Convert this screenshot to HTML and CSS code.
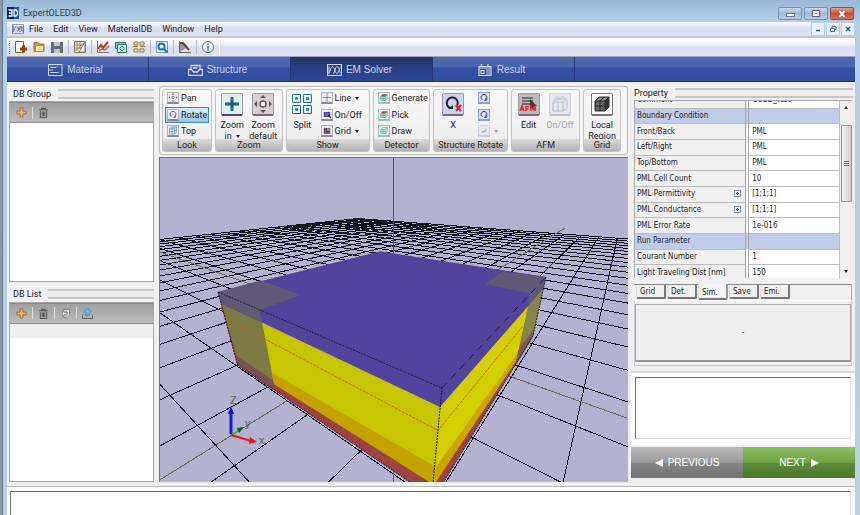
FILE: index.html
```html
<!DOCTYPE html>
<html lang="en">
<head>
<meta charset="utf-8">
<title>ExpertOLED3D</title>
<link rel="stylesheet" href="styles.css">
</head>
<body>
<svg class="defs" aria-hidden="true">
  <defs>
    <symbol id="plus" viewBox="0 0 12 12"><path d="M4.500 1h3v3.500H11v3H7.500V11h-3V7.500H1v-3h3.500z" fill="#f2b46c" stroke="#9a6a38"/></symbol>
    <symbol id="trash" viewBox="0 0 12 12"><path d="M1 3h10M4 3V1.500h4V3M2.500 4v7.500h7V4M4.500 5v5M6 5v5M7.500 5v5" fill="none" stroke="#555" stroke-width="1.100"/></symbol>
    <symbol id="wave" viewBox="0 0 15 12"><rect x=".5" y=".5" width="14" height="11" fill="none" stroke="currentColor"/><path d="M1 9.500C3 9.500 3.500 2.500 5.500 2.500S8 9.500 10 9.500s2-5 4-7M2 2.500v7M6 9.500C8 9.500 8 2.500 10 2.500s2 5 4 7" fill="none" stroke="currentColor"/></symbol>
    <symbol id="cube" viewBox="0 0 14 14"><path d="M1.500 4.500h8v8h-8zM1.500 4.500l3-3h8l-3 3M12.500 1.500v8l-3 3M5.500 4.500v8M1.500 8.500h8l3-3M5.500 4.500l3-3" fill="none" stroke="currentColor"/></symbol>
    <symbol id="rot" viewBox="0 0 14 14"><path d="M4.500 10.500a4.500 4.500 0 1 1 5 0M10.500 8v3.500H7.500" fill="none" stroke="currentColor" stroke-width="1.500"/></symbol>
    <symbol id="cross4" viewBox="0 0 14 14"><circle cx="7" cy="7" r="2" fill="none" stroke="currentColor"/><path d="M7 0l2 2.500H5zM7 14l2-2.500H5zM0 7l2.500-2v4zM14 7l-2.500-2v4z" fill="currentColor"/></symbol>
    <symbol id="det" viewBox="0 0 14 14"><path d="M2 5l3-3h7l-3 3z" fill="#c33"/><path d="M2 5.500h7v6H2zM9 5.500l3-3v6l-3 3M5.500 5.500v6M2 8.500h7" fill="none" stroke="#2b8f80"/></symbol>
    <symbol id="dets" viewBox="0 0 14 14"><path d="M2 5.500h7v6H2zM9 5.500l3-3v6l-3 3M2 5.500l3-3h7M5.500 5.500v6M2 8.500h7" fill="none" stroke="#3aa79c"/></symbol>
  </defs>
</svg>

<div class="window">
  <header class="titlebar">
    <svg class="logo" viewBox="0 0 12 12"><rect width="12" height="12" fill="#0c2560"/><rect x="7" width="5" height="12" fill="#1f56b5"/><path d="M1.500 3h3.500v6H1.500M2 6h3M7 3h2l1.500 1.500v3L9 9H7z" fill="none" stroke="#fff" stroke-width="1.300"/></svg>
    <h1>ExpertOLED3D</h1>
    <div class="winbtns">
      <button type="button" aria-label="Minimize"><svg viewBox="0 0 22 12"><rect x="7.500" y="5.500" width="8" height="3" fill="#fff" stroke="#778"/></svg></button>
      <button type="button" aria-label="Maximize"><svg viewBox="0 0 22 12"><rect x="7.500" y="2.500" width="7" height="6" fill="#fff" stroke="#667"/><rect x="10" y="5" width="2" height="1" fill="#556"/></svg></button>
      <button type="button" class="close" aria-label="Close"><svg viewBox="0 0 22 12"><path d="M8.500 3l5 6M13.500 3l-5 6" stroke="#644" stroke-width="3"/><path d="M8.500 3l5 6M13.500 3l-5 6" stroke="#fff" stroke-width="2"/></svg></button>
    </div>
  </header>

  <nav class="menubar">
    <svg class="menuicon" viewBox="0 0 15 12"><use href="#wave"/><path d="M8 7l4-4" stroke="#c43" stroke-width="1.500"/></svg>
    <button type="button">File</button><button type="button">Edit</button><button type="button">View</button><button type="button">MaterialDB</button><button type="button">Window</button><button type="button">Help</button>
    <div class="mdi">
      <button type="button" aria-label="Minimize view"><svg viewBox="0 0 12 12"><path d="M4 7.500h4" stroke="#457" stroke-width="1.500"/></svg></button>
      <button type="button" aria-label="Restore view"><svg viewBox="0 0 12 12"><path d="M3.500 5.500h4v3h-4zM5 5V3.500h4v3H8" fill="none" stroke="#568"/></svg></button>
      <button type="button" aria-label="Close view"><svg viewBox="0 0 12 12"><path d="M4 4l4 4M8 4L4 8" stroke="#457" stroke-width="1.500"/></svg></button>
    </div>
  </nav>

  <div class="toolbar">
    <span class="grip"></span>
    <button type="button" aria-label="New"><svg viewBox="0 0 14 14"><path d="M1.500 1.500h8v11h-8z" fill="#fff" stroke="#8a5a2a"/><path d="M6 9h7M9.500 5.500v7" stroke="#8a4a10" stroke-width="3"/></svg></button>
    <button type="button" aria-label="Open"><svg viewBox="0 0 14 14"><path d="M2 11.500v-9h4l1 1.500h5v7.500z" fill="#d59a3a" stroke="#a8731c"/><path d="M3.500 5.500h8v6h-8z" fill="#fbe5ae" stroke="#c08c35"/></svg></button>
    <button type="button" aria-label="Save"><svg viewBox="0 0 14 14"><path d="M1 2h12v11H1z" fill="#666b70"/><path d="M4 2h6v4H4zM4 9h6v4H4z" fill="#c4c7ca"/></svg></button>
    <span class="sep"></span>
    <button type="button" aria-label="Mesh"><svg viewBox="0 0 14 14"><path d="M1.500 1.500h11v11h-11z" fill="#ece5d8" stroke="#8b7d66"/><path d="M1 12L12 2M4 2v9M7 2v7M2 5h9M2 8h6" stroke="#a28c6b"/><path d="M12 2v10H6z" fill="#fff" stroke="#777"/></svg></button>
    <span class="sep"></span>
    <button type="button" aria-label="Chart"><svg viewBox="0 0 14 14"><path d="M1.500 1v11.500H13" fill="none" stroke="#777"/><path d="M2 9l3-4 2 3 5-6" fill="none" stroke="#b43c2d" stroke-width="2"/><path d="M3 11l3-2 3 1 4-4" fill="none" stroke="#a56a52" stroke-width="1.500"/></svg></button>
    <button type="button" aria-label="Batch"><svg viewBox="0 0 14 14"><path d="M1.500 2.500h10v6h-10z" fill="#8fd0bb" stroke="#28735e"/><path d="M3.500 4.500h9v8h-9z" fill="#d6efe6" stroke="#28735e"/><circle cx="8" cy="8.500" r="2" fill="none" stroke="#28735e"/></svg></button>
    <button type="button" aria-label="Array"><svg viewBox="0 0 14 14"><path d="M2 2h4v3H2zM8 2h4v3H8zM2 9h4v3H2zM8 9h4v3H8z" fill="#f6e2b4" stroke="#98733a"/><path d="M1 6.500h5M8 6.500h5" stroke="#98733a"/></svg></button>
    <span class="sep"></span>
    <button type="button" aria-label="Inspect"><svg viewBox="0 0 14 14"><path d="M1.500 1.500h11v11h-11z" fill="#e8f1f7" stroke="#7b98ad"/><circle cx="6.500" cy="6.500" r="3" fill="#fff" stroke="#1678b0" stroke-width="2"/><path d="M9 9l3.500 3.500" stroke="#1678b0" stroke-width="2"/></svg></button>
    <span class="sep"></span>
    <button type="button" aria-label="Profile"><svg viewBox="0 0 14 14"><path d="M1.500 1v11.500H13" fill="none" stroke="#666"/><path d="M2 3c3 0 5 3 6 5l-6 4z" fill="#999"/><path d="M2 3h3l6 7" fill="none" stroke="#6b3c38" stroke-width="2"/></svg></button>
    <span class="sep"></span>
    <button type="button" aria-label="About"><svg viewBox="0 0 14 14"><circle cx="7" cy="7" r="5.500" fill="#fff" stroke="#5a6472"/><path d="M7 6v4.500M7 3.500V5" stroke="#2674b8" stroke-width="1.500"/></svg></button>
    <span class="sep light"></span>
  </div>

  <nav class="modes">
    <button type="button"><svg viewBox="0 0 15 12"><path d="M14 .5H.5v11H14zM2.500 3.500h6M1 6h4M2.500 8.500h8" fill="none" stroke="currentColor"/></svg>Material</button>
    <button type="button"><svg viewBox="0 0 15 12"><path d="M.5 5.500h3l2 2.500h4l2-2.500h3v6H.5zM3 5V1.500h9V5M5.500 5v-1h4" fill="none" stroke="currentColor" stroke-width="1.300"/></svg>Structure</button>
    <button type="button" class="on" aria-current="page"><svg viewBox="0 0 15 12"><use href="#wave"/></svg>EM Solver</button>
    <button type="button"><svg viewBox="0 0 15 12"><path d="M1 2.500h12v9H1zM1 4h12M3.500 0v3M10 0v3M3 6.500h3v3H3zM8 6h4M8 8h4M8 10h4" fill="none" stroke="currentColor" stroke-width="1.200"/></svg>Result</button>
  </nav>

  <main class="work">
    <aside class="side">
      <section class="dock">
        <h2>DB Group</h2>
        <div class="list">
          <div class="listbar">
            <button type="button" aria-label="Add group"><svg viewBox="0 0 12 12"><use href="#plus"/></svg></button>
            <button type="button" aria-label="Delete group"><svg viewBox="0 0 12 12"><use href="#trash"/></svg></button>
          </div>
        </div>
      </section>
      <section class="dock">
        <h2>DB List</h2>
        <div class="list">
          <div class="listbar">
            <button type="button" aria-label="Add item"><svg viewBox="0 0 12 12"><use href="#plus"/></svg></button>
            <button type="button" aria-label="Delete item"><svg viewBox="0 0 12 12"><use href="#trash"/></svg></button>
            <button type="button" aria-label="Copy item"><svg viewBox="0 0 12 12"><path d="M3.500 1.500h7v6l-3 3h-4z" fill="#eee" stroke="#777"/><path d="M2.500 3.500h5v5h-5zM4 5h3M4 7h3" fill="#fff" stroke="#777"/></svg></button>
            <button type="button" aria-label="Export item"><svg viewBox="0 0 12 12"><path d="M6 0l4 4-2 2v2H4V6L2 4z" fill="#6fb6e4" stroke="#3f7fae"/><path d="M.5 8v3.500h11V8" fill="none" stroke="#555"/></svg></button>
          </div>
          <div class="listhead"></div>
        </div>
      </section>
    </aside>

    <section class="center">
      <div class="ribbon">
        <div class="group look">
          <div class="items col">
            <button type="button" class="sm"><svg class="ic gray" viewBox="0 0 14 14"><use href="#cross4"/></svg>Pan</button>
            <button type="button" class="sm on"><svg class="ic violet" viewBox="0 0 14 14"><use href="#rot"/></svg>Rotate</button>
            <button type="button" class="sm"><svg class="ic sky" viewBox="0 0 14 14"><use href="#cube"/></svg>Top</button>
          </div>
          <h3>Look</h3>
        </div>
        <div class="group">
          <div class="items">
            <button type="button" class="lg"><svg class="big teal" viewBox="0 0 20 20"><path d="M10 3v14M3 10h14" stroke="#176a82" stroke-width="3"/></svg><span>Zoom<br>in <i class="arr"></i></span></button>
            <button type="button" class="lg"><svg class="big warm" viewBox="0 0 20 20"><circle cx="10" cy="10" r="3" fill="#f4eeee" stroke="#5c5254" stroke-width="1.500"/><path d="M10 1l3 3H7zM10 19l3-3H7zM1 10l3-3v6zM19 10l-3-3v6z" fill="#5c5254"/></svg><span>Zoom<br>default</span></button>
          </div>
          <h3>Zoom</h3>
        </div>
        <div class="group">
          <div class="items">
            <button type="button" class="lg"><svg class="big split" viewBox="0 0 20 20"><path d="M.5.5h8v8h-8zM11.500.5h8v8h-8zM.5 11.500h8v8h-8zM11.500 11.500h8v8h-8z" fill="#eaf7fa" stroke="#1c7a92"/><path d="M3 3h3v3H3zM14 3h3v3h-3zM3 14h3v3H3zM14 14h3v3h-3z" fill="#3791ac"/></svg><span>Split</span></button>
            <div class="stack">
              <button type="button" class="sm"><svg class="ic gray" viewBox="0 0 14 14"><path d="M0 7h14M7 0v14" stroke="#446088"/></svg>Line <i class="arr"></i></button>
              <button type="button" class="sm"><svg class="ic gray" viewBox="0 0 14 14"><path d="M2 3h10v8H2z" fill="#3a49c0"/><path d="M4 5h5v4H4z" fill="#d34860"/><path d="M9 8l4 4" stroke="#223" stroke-width="2"/></svg>On/Off</button>
              <button type="button" class="sm"><svg class="ic gray" viewBox="0 0 14 14"><path d="M2 3h10v9H2z" fill="#403a6a"/><path d="M3 4h3v3H3z" fill="#d24343"/><path d="M7 4h4v3H7z" fill="#e0b13b"/><path d="M3 8h3v3H3z" fill="#c9484a"/><path d="M7 8h4v3H7z" fill="#4c56c4"/></svg>Grid <i class="arr"></i></button>
            </div>
          </div>
          <h3>Show</h3>
        </div>
        <div class="group">
          <div class="items col">
            <button type="button" class="sm"><svg class="ic mint" viewBox="0 0 14 14"><use href="#det"/></svg>Generate</button>
            <button type="button" class="sm"><svg class="ic mint" viewBox="0 0 14 14"><use href="#det"/></svg>Pick</button>
            <button type="button" class="sm"><svg class="ic mint" viewBox="0 0 14 14"><use href="#dets"/></svg>Draw</button>
          </div>
          <h3>Detector</h3>
        </div>
        <div class="group">
          <div class="items">
            <button type="button" class="lg"><svg class="big blue" viewBox="0 0 20 20"><path d="M7 14a5.500 5.500 0 1 1 6-1" fill="none" stroke="#223" stroke-width="2"/><path d="M5 15h5v-4z" fill="#223"/><path d="M13 11l5 6M18 11l-5 6" stroke="#e22" stroke-width="2"/></svg><span>X</span></button>
            <div class="stack">
              <button type="button" class="sm" aria-label="Rotate Y"><svg class="ic blue" viewBox="0 0 14 14"><use href="#rot"/><path d="M9 8l3 3" stroke="#3a9c3a" stroke-width="2"/></svg></button>
              <button type="button" class="sm" aria-label="Rotate Z"><svg class="ic blue" viewBox="0 0 14 14"><use href="#rot"/><path d="M9 8l3 3" stroke="#3a6fd0" stroke-width="2"/></svg></button>
              <button type="button" class="sm off" aria-label="Undo rotation" disabled><svg class="ic blue" viewBox="0 0 14 14"><path d="M3 9h4l4-3" fill="none" stroke="#446" stroke-width="2"/></svg> <i class="arr"></i></button>
            </div>
          </div>
          <h3>Structure Rotate</h3>
        </div>
        <div class="group">
          <div class="items">
            <button type="button" class="lg"><svg class="big dark" viewBox="0 0 20 20"><path d="M3 4h11M3 7h11M3 10h11" stroke="#555" stroke-width="1.500"/><path d="M11 5l7 7-3 0 2 4-2 1-2-4-2 2z" fill="#4a3434"/><path d="M1 17l2-5 2 5M2 15.500h2.500M7 17v-4.500h3M7 15h2.500M12 17v-4.500l2 2.500 2-2.500V17" fill="none" stroke="#e8262a" stroke-width="1.500"/></svg><span>Edit</span></button>
            <button type="button" class="lg off" disabled><svg class="big blue" viewBox="0 0 20 20"><path d="M3 8h10v9H3zM3 8l3-3h11l-4 3M17 5v9l-4 3M8 8v9M5 5c0-4 4-2 5 0 1-3 5-3 5 0" fill="none" stroke="#668"/></svg><span>On/Off</span></button>
          </div>
          <h3>AFM</h3>
        </div>
        <div class="group local">
          <div class="items">
            <button type="button" class="lg"><svg class="big cubebox" viewBox="0 0 20 20"><path d="M3 7h10v10H3z" fill="#666"/><path d="M3 7l4-4h10l-4 4z" fill="#8a8a8a"/><path d="M17 3v10l-4 4V7z" fill="#3c3c3c"/><path d="M3 7h10v10H3zM3 7l4-4h10l-4 4M17 3v10l-4 4M8 7v10M3 12h10l4-4M8 7l4-4M15 5v10" fill="none" stroke="#262626"/></svg><span>Local<br>Region</span></button>
          </div>
          <h3>Grid</h3>
        </div>
      </div>

      <svg class="view" viewBox="160 157 468 324" preserveAspectRatio="xMidYMid slice" role="img" aria-label="3D structure view">
        <g id="floor" fill="none" stroke="#15151f" stroke-width="1" shape-rendering="crispEdges"></g>
        <g stroke="#6b6a52" stroke-width="1" shape-rendering="crispEdges">
          <path d="M150 247.500L627 417M150 485L565 227"/>
          <path d="M393.500 400V482"/>
        </g>
        <path d="M218 291L380 250.500 546 276 542.500 288 533 335 443 482H411L237.500 364z" fill="#9c4444"/>
        <path d="M221.500 302L262.500 321 274 383 237 357z" fill="#7b7a42"/>
        <path d="M236 354L274 380V389L238 364z" fill="#7a5052"/>
        <path d="M262 321L440 405 434 483 274 383z" fill="#c7c400"/>
        <path d="M272.500 372L436 466 434 484 274 382.500z" fill="#c4a200"/>
        <path d="M440 405L529 304 516 360 434 483z" fill="#d4d000"/>
        <path d="M436 466L517 353 516 360 434 484z" fill="#caa400"/>
        <path d="M528 305L542.500 287 533 334 516.500 361z" fill="#86844a"/>
        <path d="M518 350L534 328 533 336 516 364z" fill="#805458"/>
        <path d="M218 291L380 250.500 546 276 542.500 288 528 305 440 406 262 321.500 221.500 303z" fill="#52449c"/>
        <path d="M218 291L261 279.500 301 294 259.500 309 262.500 321.500 221.500 303z" fill="#5f5975"/>
        <path d="M502 271L546 276 542.500 288 528 305 530 292.500 485 283z" fill="#5f5975"/>
        <path d="M225 317L438 429.500 523 325" fill="none" stroke="#c8641c" stroke-dasharray="3 1"/>
        <g fill="none" stroke="#1b1836" stroke-dasharray="2 1">
          <path d="M218 291L442 387 433 482M218 291L237.500 364 411 482M546 276L533 335 443 482"/>
          <path d="M442 387L546 276" stroke-dasharray="7 6"/>
        </g>
        <path d="M393.500 157V283" stroke="#55544e"/>
        <path d="M231 433V412" stroke="#1616e0" stroke-width="3"/><path d="M228 413l3-8 3 8z" fill="#1616e0"/>
        <path d="M231 434l9-5" stroke="#18c018" stroke-width="2"/><path d="M237 427l7-1-5 6z" fill="#0c5c1c"/>
        <path d="M231 434l20 6" stroke="#f01414" stroke-width="2"/><path d="M250 436l7 5-8 2z" fill="#f01414"/>
        <g class="axis"><text x="230" y="403">Z</text><text x="245" y="426">y</text><text x="259" y="443">x</text></g>
      </svg>
    </section>

    <aside class="props">
      <h2>Property</h2>
      <div class="sheet">
        <div class="sheetbody">
          <table>
            <tbody>
              <tr><th scope="row">Comment</th><td>CO2D_Test</td></tr>
              <tr class="cat"><th scope="row">Boundary Condition</th><td></td></tr>
              <tr><th scope="row">Front/Back</th><td>PML</td></tr>
              <tr><th scope="row">Left/Right</th><td>PML</td></tr>
              <tr><th scope="row">Top/Bottom</th><td>PML</td></tr>
              <tr><th scope="row">PML Cell Count</th><td>10</td></tr>
              <tr><th scope="row">PML Permittivity<button type="button" class="exp" aria-label="Expand"></button></th><td>[1;1;1]</td></tr>
              <tr><th scope="row">PML Conductance<button type="button" class="exp" aria-label="Expand"></button></th><td>[1;1;1]</td></tr>
              <tr><th scope="row">PML Error Rate</th><td>1e-016</td></tr>
              <tr class="cat"><th scope="row">Run Parameter</th><td></td></tr>
              <tr><th scope="row">Courant Number</th><td>1</td></tr>
              <tr><th scope="row">Light Traveling Dist [nm]</th><td>150</td></tr>
            </tbody>
          </table>
        </div>
        <div class="scroll"><i class="up"></i><span class="thumb"></span><i class="arr"></i></div>
      </div>
      <div class="tabs" role="tablist">
        <button type="button" role="tab">Grid</button><button type="button" role="tab">Det.</button><button type="button" role="tab" class="on" aria-selected="true">Sim.</button><button type="button" role="tab">Save</button><button type="button" role="tab">Emi.</button>
      </div>
      <div class="hint"><p>-</p></div>
      <div class="notes"><textarea aria-label="Notes"></textarea></div>
      <div class="steps">
        <button type="button" class="prev"><svg viewBox="0 0 8 8"><path d="M8 0v8L0 4z" fill="#fff"/></svg>PREVIOUS</button>
        <button type="button" class="next">NEXT<svg viewBox="0 0 8 8"><path d="M0 0v8l8-4z" fill="#fff"/></svg></button>
      </div>
    </aside>
  </main>

  <footer class="log"><textarea aria-label="Log"></textarea></footer>
</div>
<script src="script.js"></script>
</body>
</html>
```
FILE: styles.css
```css
* { box-sizing: border-box; }
body { margin: 0; font: 9px/12px Roboto, "Open Sans", sans-serif; color: #222; background: #8d99a8; }
button { font: inherit; color: inherit; border: 0; padding: 0; margin: 0; background: none; }
h1, h2, h3, p { margin: 0; font: inherit; }
svg { display: block; flex: none; }
.defs { width: 0; height: 0; position: absolute; }

.window { height: 100vh; display: flex; flex-direction: column; margin-left: 2px; padding: 1px 5px 0 4px; background: linear-gradient(#9ab9d6, #b4cfea 22px, #b7d1ec); border-left: 1px solid #6c7c8c; overflow: hidden; }

.titlebar { flex: none; height: 21px; display: flex; align-items: center; gap: 4px; padding-top: 3px; }
.logo { width: 12px; height: 12px; }
.titlebar h1 { color: #333b44; }
.winbtns { margin-left: auto; display: flex; gap: 2px; padding-right: 1px; }
.winbtns button { width: 24px; height: 13px; border: 1px solid #7391b0; border-radius: 2px; background: linear-gradient(#c5d9ec, #9fbcd8 50%, #b3cde6); }
.winbtns svg { width: 22px; height: 12px; }
.winbtns .close { background: linear-gradient(#e3a392, #c8503a 50%, #d8705a); border-color: #8f4c44; }

.menubar { flex: none; height: 14px; display: flex; align-items: center; gap: 10px; padding-left: 5px; background: linear-gradient(#fff, #d9def0 6px, #dce1f2); }
.menuicon { width: 12px; height: 10px; color: #5a6f8f; margin-right: -5px; }
.mdi { margin-left: auto; display: flex; gap: 1px; }
.mdi button { width: 14px; height: 14px; border: 1px solid #b0cfe2; background: #e6f1fb; }
.mdi svg { width: 12px; height: 12px; }

.toolbar { flex: none; height: 21px; display: flex; align-items: center; gap: 4px; padding-left: 2px; border-top: 2px solid #c6c7cb; border-bottom: 1px solid #a3a6b3; background: linear-gradient(#fff, #f4f5fa 6px, #dadff0 9px, #dfe3f3); }
.toolbar svg { width: 14px; height: 14px; }
.toolbar .grip { width: 1px; height: 13px; border-left: 1px dotted #888; }
.toolbar .sep { width: 1px; height: 14px; background: #b5b9c6; }
.toolbar .sep.light { background: #fff; height: 18px; }

.modes { flex: none; height: 25px; display: flex; background: linear-gradient(#5069b2, #4862ae 10px, #3450a4 11px, #314da2); border-bottom: 1px solid #1d2d66; }
.modes button { flex: 0 0 142px; display: flex; align-items: center; justify-content: center; gap: 4px; padding: 1px 4px 0 0; font-family: "Liberation Sans", sans-serif; font-size: 10px; color: #d0d6e6; border-right: 1px solid #263a78; }
.modes svg { width: 15px; height: 12px; }
.modes .on { background: linear-gradient(#263562, #2a3f7e 10px, #2c479a); }

.work { flex: 1; min-height: 0; display: grid; grid-template-columns: 152px minmax(0, 1fr) 227px; background: #f0f0f0; padding-top: 4px; padding-bottom: 5px; }

.side { display: flex; flex-direction: column; gap: 5px; padding: 0 5px 0 2px; }
.dock { flex: 1; display: flex; flex-direction: column; }
h2 { flex: none; display: flex; align-items: center; gap: 7px; height: 15px; padding-left: 4px; }
h2::after { content: ""; flex: 1; height: 6px; border: 1px solid #c6c6c6; border-width: 2px 0; background: #ececec; }
.list { flex: 1; background: #fff; border: 1px solid #a8a8a8; }
.listbar { height: 21px; display: flex; align-items: center; padding-left: 1px; background: linear-gradient(#a0a0a0, #bcbcbc); border-bottom: 1px solid #8c8c8c; border-top: 1px solid #888; }
.listbar button { width: 22px; height: 12px; padding-left: 5px; border-right: 1px solid #dedede; }
.listbar button:last-child { border-right: 0; }
.listbar svg { width: 11px; height: 11px; }
.listhead { height: 14px; background: #efefef; }

.center { display: flex; flex-direction: column; min-width: 0; }
.ribbon { flex: none; height: 69px; display: grid; grid-template-columns: 50fr 68fr 84fr 58fr 75fr 69fr 38fr; gap: 3px; padding: 2px 6px 2px 2px; border: 1px solid #bcbcbc; border-radius: 3px; background: #f6f6f6; }
.group { min-width: 0; display: flex; flex-direction: column; border: 1px solid #c2c2c2; border-radius: 3px; background: linear-gradient(#f8f8f8, #ececec); overflow: hidden; }
.group h3 { flex: none; height: 12px; text-align: center; white-space: nowrap; background: linear-gradient(#dcdcdc, #b2b2b2); }
.items { flex: 1; min-height: 0; display: flex; justify-content: space-around; padding: 0 2px; }
.items.col, .stack { display: flex; flex-direction: column; justify-content: space-between; }
.items.col { align-items: flex-start; }
.sm { display: flex; align-items: center; gap: 2px; height: 16px; padding: 0 1px; white-space: nowrap; border: 1px solid transparent; }
.look .sm { align-self: stretch; }
.sm.on { background: linear-gradient(#d7edf8, #8fcbe8); border-color: #3f87ae; }
.ic { width: 12px; height: 12px; border: 1px solid #b4b4bc; border-bottom: 2px solid #8a88a0; background: #ececf2; }
.ic.gray { color: #666; }
.ic.violet { color: #6458a0; }
.ic.sky { color: #3f86b4; }
.ic.mint { border-color: #9cc4bc; background: #e2f2ee; }
.ic.blue { color: #334; background: #d6def0; border-color: #94a0c0; }
.lg { display: flex; flex-direction: column; align-items: center; line-height: 11px; padding-top: 3px; }
.lg span { padding-top: 4px; text-align: center; white-space: nowrap; }
.big { width: 22px; height: 23px; border: 1px solid #9a9aa2; border-bottom: 2px solid #77697f; border-radius: 2px; background: #e4e4e8; }
.big.teal { background: #ddf0ee; border-bottom-color: #5a3f6f; }
.big.warm { background: #d8cfcf; }
.big.split { border-color: transparent; background: none; }
.big.blue { background: #c9d5ec; }
.big.dark { background: #bababa; }
.big.cubebox { background: #fff; border-color: #777; }
.off { opacity: .4; }
.arr { display: inline-block; width: 0; height: 0; border: 2px solid transparent; border-top: 3px solid #222; border-bottom: 0; vertical-align: middle; margin-left: 2px; }
.view { flex: 1; min-height: 0; width: 100%; margin-top: 2px; border-left: 1px solid #777; border-top: 1px solid #777; background: #b3b3d1; }
.axis { font: 11px "Liberation Sans", sans-serif; fill: #5d5d54; }

.props { display: flex; flex-direction: column; min-width: 0; padding-left: 3px; font-family: "DejaVu Sans Condensed", "DejaVu Sans", sans-serif; font-size: 8px; }
.props h2 { padding-left: 3px; margin-right: 2px; font: 9px/12px Roboto, sans-serif; height: 14px; }
.sheet { flex: none; display: flex; height: 178px; margin: 0 3px; border-left: 1px solid #aaa; border-top: 1px solid #aaa; }
.sheetbody { flex: 1; display: flex; align-items: flex-end; overflow: hidden; }
table { width: 100%; height: 188px; flex: none; margin-bottom: -3px; table-layout: fixed; border-collapse: collapse; }
th, td { padding: 0 0 0 2px; text-align: left; font-weight: normal; line-height: 12px; border-bottom: 1px solid #bcbcbc; white-space: nowrap; }
th { width: 55%; border-right: 4px double #a8a8a8; }
td { background: #fff; padding-left: 3px; }
.cat th, .cat td { background: #bfcdeb; }
.exp { float: right; width: 7px; height: 7px; margin: 2px 4px 0 0; border: 1px solid #7d8fa8; background: linear-gradient(#333, #333) center/3px 1px no-repeat, linear-gradient(#333, #333) center/1px 3px no-repeat, #e8eef6; }
.scroll { flex: none; width: 13px; display: flex; flex-direction: column; align-items: center; padding: 5px 0; border-left: 1px solid #bbb; }
.scroll .up { border: 2px solid transparent; border-top: 0; border-bottom: 3px solid #333; }
.thumb { width: 11px; height: 77px; margin: 16px 0 auto; border: 1px solid #999; border-radius: 1px; background: linear-gradient(#777, #777) center/5px 1px no-repeat, linear-gradient(#777, #777) 50% 47%/5px 1px no-repeat, linear-gradient(#777, #777) 50% 53%/5px 1px no-repeat, linear-gradient(90deg, #f2f2f2, #cfcfcf); }
.scroll .arr { margin: 0; }
.tabs { flex: none; display: flex; align-items: flex-start; gap: 1px; height: 16px; margin: 6px 3px 0; padding-left: 2px; border-top: 1px solid #888; border-right: 1px solid #aaa; }
.tabs button { width: 30px; height: 14px; text-align: left; padding: 1px 0 0 3px; border: 1px solid #777; border-width: 0 2px 2px 1px; border-left-color: #ddd; border-radius: 0 0 2px 2px; }
.tabs .on { height: 16px; padding-top: 3px; margin-top: -1px; background: #f4f4f4; border-right-color: #999; }
.hint { flex: none; height: 66px; margin: 0 3px; padding: 3px 0; border: 1px solid #c9c9c9; border-top-color: #fff; }
.hint p { height: 58px; line-height: 56px; text-align: center; background: #eee; border: 1px solid #aaa; border-bottom: 2px solid #999; }
.notes { flex: none; height: 74px; margin-top: 5px; padding: 4px 4px 6px; background: #fff; border-top: 2px solid #ddd; }
textarea { display: block; width: 100%; height: 62px; resize: none; background: #fff; border: 1px solid #d5dde2; border-top: 1px solid #666; border-left: 1px solid #777; font: inherit; }
.steps { flex: none; display: flex; height: 31px; margin-top: 2px; font: 10px/12px "Liberation Sans", sans-serif; }
.steps button { flex: 1; display: flex; align-items: center; justify-content: center; gap: 5px; color: #fff; }
.steps svg { width: 8px; height: 8px; }
.prev { background: linear-gradient(#b9b9b9, #9a9a9a 50%, #858585 51%, #727272); }
.next { background: linear-gradient(#8fc05f, #6fa443 50%, #5c8c38 51%, #4c752e); }

.log { flex: none; height: 29px; padding: 4px 4px 0 3px; background: #fff; border-top: 1px solid #bbb; overflow: hidden; }
.log textarea { height: 40px; }
```
FILE: script.js
```js
// Ground grid in perspective. a and b are the two floor directions in depth
// units; a point is at depth 1 + a + b, and each direction has its own
// vanishing point on the horizon.
const HORIZON = 189, VANISH_A = -18, VANISH_B = 628, ORIGIN_X = 393.5, CAMERA = 144.7;
const STEP_A = 0.09, STEP_B = 0.1194, FIRST_A = 0.0467, FIRST_B = 0.0456, COUNT = 19, NEAR = 0.3;

function project(a, b) {
  const w = 1 + a + b;
  const x = (ORIGIN_X + VANISH_A * a + VANISH_B * b) / w;
  return x.toFixed(1) + ' ' + (HORIZON + CAMERA / w).toFixed(1);
}

const farA = FIRST_A + STEP_A * COUNT;
const farB = FIRST_B + STEP_B * COUNT;
let d = '';
for (let k = -COUNT - 1; k <= COUNT; k++) {
  const a = FIRST_A + STEP_A * k;
  const b = FIRST_B + STEP_B * k;
  if (1 + a + farB > NEAR) d += 'M' + project(a, farB) + 'L' + project(a, NEAR - 1 - a);
  if (1 + farA + b > NEAR) d += 'M' + project(farA, b) + 'L' + project(NEAR - 1 - b, b);
}
const path = document.createElementNS('http://www.w3.org/2000/svg', 'path');
path.setAttribute('d', d);
document.getElementById('floor').appendChild(path);
```
